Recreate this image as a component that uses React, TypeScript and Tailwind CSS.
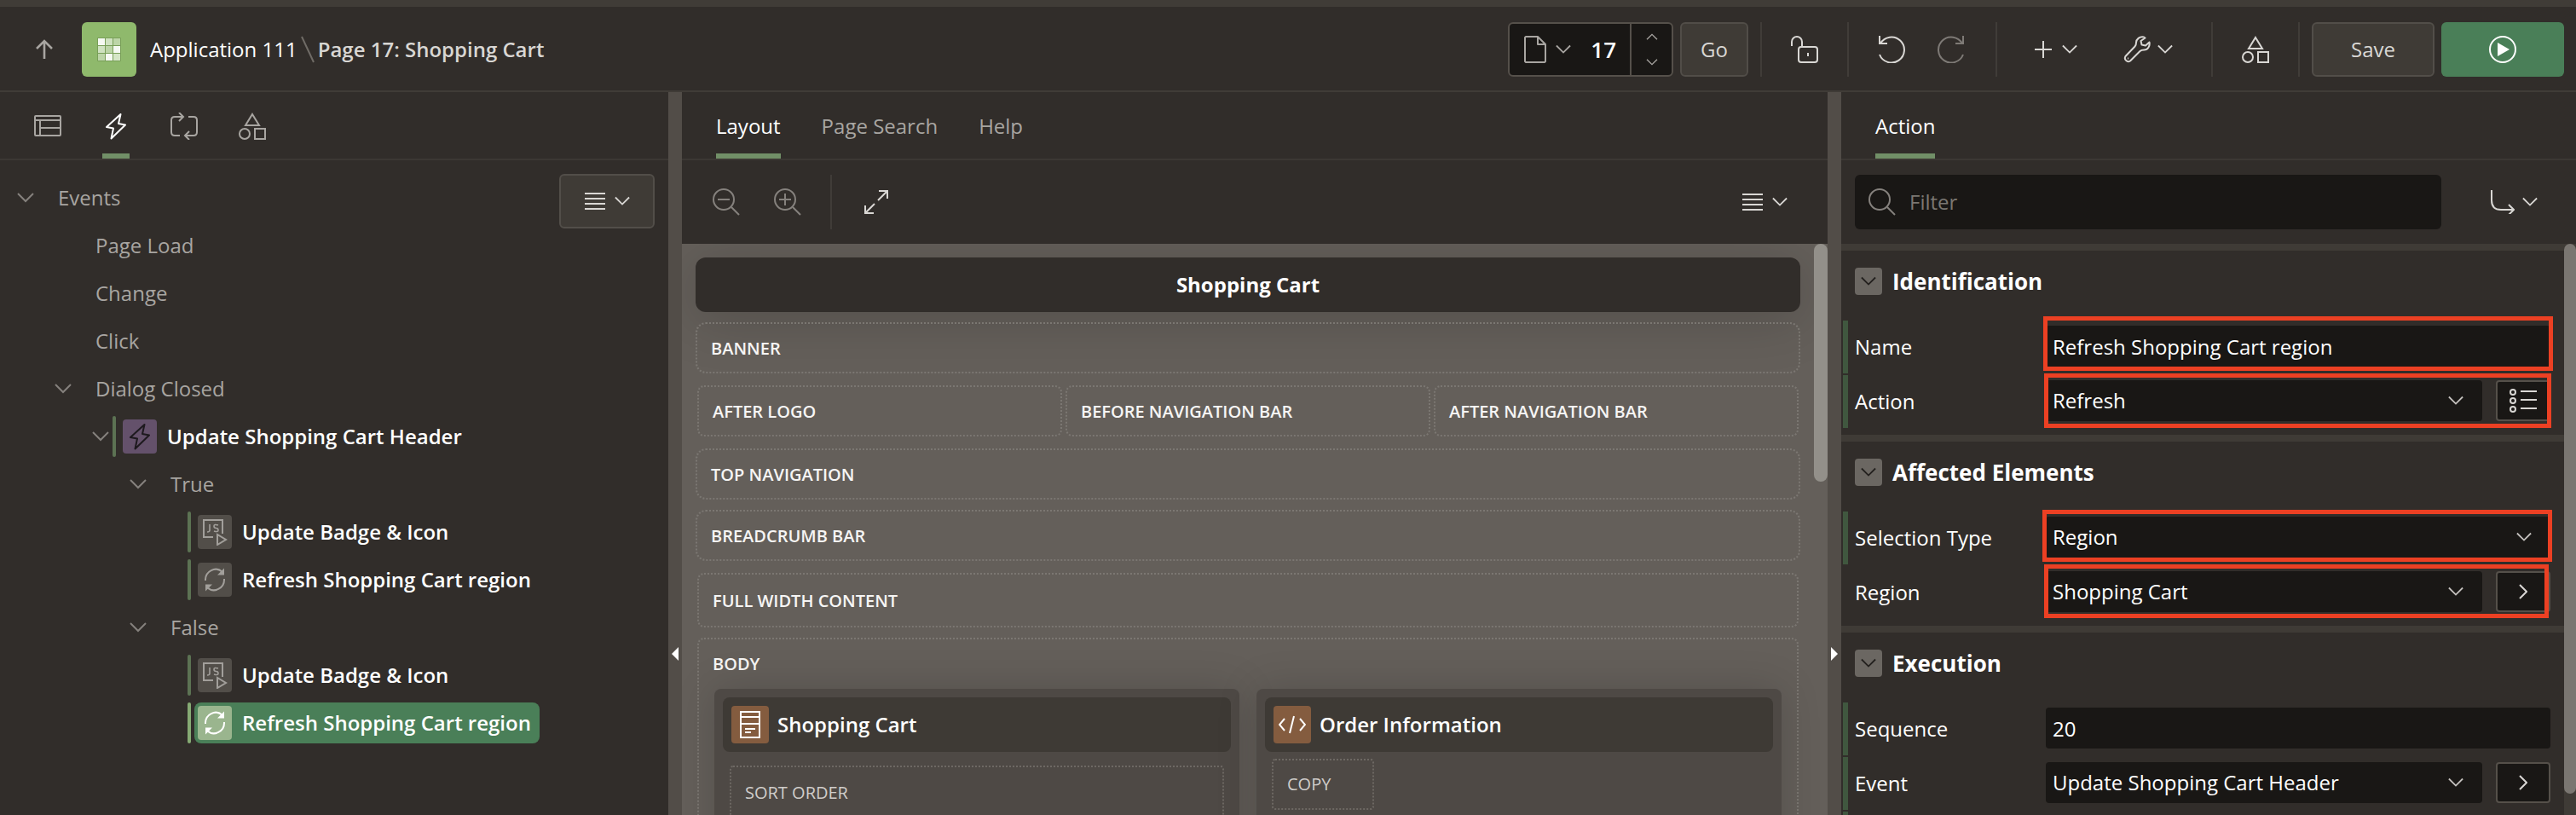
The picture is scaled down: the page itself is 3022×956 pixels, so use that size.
import React from "react";

type IconProps = { className?: string };

function Stroke({ className = "", box = "0 0 32 32", children }: { className?: string; box?: string; children: React.ReactNode }) {
  return (
    <svg aria-hidden="true" viewBox={box} fill="none" stroke="currentColor" strokeWidth={2} className={"shrink-0 " + className}>
      {children}
    </svg>
  );
}

const Chevron = ({ className = "w-5 h-3" }: IconProps) => (
  <Stroke box="0 0 20 12" className={className}>
    <path d="M1 1l9 9 9-9" />
  </Stroke>
);

const Shapes = ({ className = "size-8" }: IconProps) => (
  <Stroke className={className}>
    <path d="M16 2l8 13H8z" />
    <circle cx="7" cy="25" r="6" />
    <rect x="19" y="19" width="12" height="12" />
  </Stroke>
);

const Bolt = ({ className = "size-8" }: IconProps) => (
  <Stroke className={className}>
    <path d="M21.5 2L5 17l8 1.500L10.500 30.500 27 14.500l-8-1.500z" strokeLinejoin="round" />
  </Stroke>
);

const Refresh = ({ className = "size-8" }: IconProps) => (
  <Stroke className={className}>
    <path d="M5 17A12 12.500 0 0 1 25 7M27 15A12 12.500 0 0 1 7 25" />
    <path d="M27 2.500v8h-8zM5 29.500v-8h8z" fill="currentColor" stroke="none" />
  </Stroke>
);

const Script = ({ className = "size-8" }: IconProps) => (
  <Stroke className={className}>
    <path d="M14 22H3V2h22v16" />
    <path d="M10 7v7q0 2-3 2M20 8q-5-1.500-5 1t2.500 2.500 2.500 2.500-5 1" strokeWidth={1.6} />
    <path d="M19 19v12l10-6z" />
  </Stroke>
);

const Menu = ({ className = "w-6 h-5" }: IconProps) => (
  <Stroke box="0 0 24 20" className={className}>
    <path d="M0 1h24M0 7h24M0 13h24M0 19h24" />
  </Stroke>
);

const Divider = () => <span className="h-16 w-0.5 shrink-0 bg-[#403c38]" />;

function Header() {
  return (
    <header className="flex h-[108px] shrink-0 items-center justify-between border-t-8 border-b-2 border-[#403c37] pt-0.5 pr-[14px] pl-9">
      <nav aria-label="Breadcrumb" className="flex items-center">
        <button aria-label="Up" className="flex size-8 items-center justify-center text-[#a8a5a1]">
          <Stroke box="0 0 20 24" className="h-6 w-5">
            <path d="M10 23V3M1 11l9-9 9 9" strokeWidth={2.6} />
          </Stroke>
        </button>
        <span className="ml-7 flex size-16 items-center justify-center rounded-md bg-[#8fb96c]">
          <svg aria-hidden="true" viewBox="0 0 28 28" className="size-7">
            <rect width="28" height="28" rx="1" fill="#789f58" />
            <g fill="#bcd5a7">
              <rect x="10" y="1" width="8" height="8" fill="#cfe2c0" />
              <rect x="19" y="1" width="8" height="8" />
              <rect x="1" y="10" width="8" height="8" fill="#cfe2c0" />
              <rect x="10" y="10" width="8" height="8" />
              <rect x="1" y="19" width="8" height="8" />
              <rect x="19" y="19" width="8" height="8" fill="#d5e6c7" />
            </g>
            <g fill="#f5f9f2">
              <rect x="1" y="1" width="8" height="8" />
              <rect x="19" y="10" width="8" height="8" />
              <rect x="10" y="19" width="8" height="8" />
            </g>
          </svg>
        </span>
        <a href="#application" className="ml-4 text-white">Application 111</a>
        <Stroke box="0 0 16 32" className="mx-1 h-8 w-4 text-[#6f6b66]">
          <path d="M1 1l14 30" />
        </Stroke>
        <h1 className="font-semibold text-[#d8d6d3]">Page 17: Shopping Cart</h1>
      </nav>
      <div className="flex items-center text-[#d9d7d4]">
        <div className="flex h-16 w-[194px] rounded-md border-2 border-[#55504a] bg-[#191715]">
          <button aria-label="Choose page" className="flex items-center gap-[11px] pl-[17px] text-[#a8a5a1]">
            <Stroke box="0 0 26 32" className="h-8 w-[26px]">
              <path d="M3 1h13l9 9v20l-1 1H2l-1-1V2l1-1zM16 1v9h9" strokeLinejoin="round" />
            </Stroke>
            <Chevron className="h-3 w-[18px]" />
          </button>
          <input aria-label="Page number" defaultValue="17" className="w-full min-w-0 bg-transparent pr-4 text-right text-[26px] font-semibold text-white outline-none" />
          <div className="flex w-[49px] shrink-0 flex-col items-center justify-between border-l-2 border-[#55504a] py-[11px] text-[#a8a5a1]">
            <button aria-label="Next page"><Chevron className="h-2 w-[14px] rotate-180" /></button>
            <button aria-label="Previous page"><Chevron className="h-2 w-[14px]" /></button>
          </div>
        </div>
        <button className="ml-2 h-16 w-20 rounded-md border-2 border-[#514d48] bg-[#3f3b36] font-medium">Go</button>
        <div className="ml-[14px] flex items-center">
          <Divider />
          <button aria-label="Unlocked" className="mx-[34px]">
            <Stroke className="size-8">
              <path d="M1 12V7a6 6 0 0 1 12 0v6" />
              <rect x="9" y="13" width="22" height="18" rx="3" />
              <path d="M20 20v4" />
            </Stroke>
          </button>
          <Divider />
          <button aria-label="Undo" className="ml-[34px]">
            <Stroke className="size-8"><path d="M2 0v9h9M3 9A15 15 0 1 1 2 22" /></Stroke>
          </button>
          <button aria-label="Redo" className="mr-9 ml-[38px] text-[#7e7a76]">
            <Stroke className="size-8"><path d="M30 0v9h-9M29 9A15 15 0 1 0 30 22" /></Stroke>
          </button>
          <Divider />
          <button aria-label="Create" className="ml-11 flex items-center gap-3">
            <Stroke box="0 0 20 20" className="size-5"><path d="M10 0v20M0 10h20" /></Stroke>
            <Chevron className="h-3 w-[18px]" />
          </button>
          <button aria-label="Utilities" className="mr-[45px] ml-[54px] flex items-center gap-2">
            <Stroke className="size-8">
              <path d="M24 1.500C19 .5 15 4 15 8q0 3-1.500 4.500L2.500 24a4 4 0 0 0 5.500 5.500L19.500 18q1.500-1.500 5-1.500c4 0 7-4.500 6-9l-4.500 4-4.500-1-1-4.500 5-3.500z" strokeLinejoin="round" />
              <path d="M5 26.500h1" />
            </Stroke>
            <Chevron className="h-3 w-[18px]" />
          </button>
          <Divider />
          <button aria-label="Shared components" className="mx-[34px]"><Shapes /></button>
          <Divider />
        </div>
        <button className="ml-[14px] h-16 w-36 rounded-md border-2 border-[#524e49] bg-[#3f3b36] font-medium">Save</button>
        <button aria-label="Save and run page" className="ml-2 flex h-16 w-36 items-center justify-center rounded-md bg-[#4a7f58] text-white">
          <Stroke className="size-8">
            <circle cx="16" cy="16" r="15" />
            <path d="M10 8v16l14-8z" fill="currentColor" stroke="none" />
          </Stroke>
        </button>
      </div>
    </header>
  );
}

type Node = { level: number; label: string; open?: boolean; icon?: "event" | "script" | "refresh"; selected?: boolean };

const nodes: Node[] = [
  { level: 0, label: "Events", open: true },
  { level: 1, label: "Page Load" },
  { level: 1, label: "Change" },
  { level: 1, label: "Click" },
  { level: 1, label: "Dialog Closed", open: true },
  { level: 2, label: "Update Shopping Cart Header", open: true, icon: "event" },
  { level: 3, label: "True", open: true },
  { level: 4, label: "Update Badge & Icon", icon: "script" },
  { level: 4, label: "Refresh Shopping Cart region", icon: "refresh" },
  { level: 3, label: "False", open: true },
  { level: 4, label: "Update Badge & Icon", icon: "script" },
  { level: 4, label: "Refresh Shopping Cart region", icon: "refresh", selected: true },
];

const indents = ["pl-5", "pl-16", "pl-[108px]", "pl-[152px]", "pl-[196px]"];

function TreeRow({ node }: { node: Node }) {
  const tile =
    node.icon === "event" ? "bg-[#64516b] text-[#1d191e]" : node.selected ? "bg-[#9ab58e] text-white" : "bg-[#524e49] text-[#a29f9b]";
  return (
    <li role="treeitem" aria-selected={!!node.selected} className={"flex h-14 items-center " + indents[node.level]}>
      <span className="w-5 shrink-0 text-[#85817d]">{node.open && <Chevron />}</span>
      {node.icon ? (
        <>
          <span className={"ml-1 h-12 w-1 rounded-full " + (node.selected ? "bg-[#86ab74]" : "bg-[#5c7253]")} />
          <span className={"ml-1 flex h-12 items-center rounded-lg pr-2.5 pl-1 font-semibold text-white " + (node.selected ? "bg-[#4a7f58]" : "")}>
            <span className={"mr-3 flex size-10 items-center justify-center rounded " + tile}>
              {node.icon === "event" && <Bolt />}
              {node.icon === "script" && <Script />}
              {node.icon === "refresh" && <Refresh />}
            </span>
            {node.label}
          </span>
        </>
      ) : (
        <span className="pl-7 text-[#a8a5a1]">{node.label}</span>
      )}
    </li>
  );
}

function TreePanel() {
  return (
    <aside className="flex w-[784px] shrink-0 flex-col">
      <div role="tablist" className="flex h-20 shrink-0 border-b-2 border-[#3c3834] pl-4 text-[#a8a5a1]">
        <button role="tab" aria-label="Rendering" className="flex w-20 items-center justify-center pt-0.5">
          <Stroke className="size-8">
            <rect x="1" y="4" width="30" height="23" rx="1" />
            <path d="M1 9h30M7 9v18M7 18h24" />
          </Stroke>
        </button>
        <button role="tab" aria-label="Dynamic Actions" aria-selected="true" className="mx-6 flex w-8 items-center justify-center border-b-6 border-[#718f67] pt-2 text-white">
          <Bolt />
        </button>
        <button role="tab" aria-label="Processing" className="flex w-20 items-center justify-center pt-0.5">
          <Stroke className="size-8">
            <path d="M15 5H5Q1 5 1 9v14q0 4 4 4h6M17 27h10q4 0 4-4V9q0-4-4-4h-6M10 0l5 5-5 5M22 22l-5 5 5 5" />
          </Stroke>
        </button>
        <button role="tab" aria-label="Page Shared Components" className="flex w-20 items-center justify-center pt-0.5"><Shapes /></button>
      </div>
      <div className="relative pt-4">
        <ul role="tree">
          {nodes.map((n, i) => <TreeRow key={i} node={n} />)}
        </ul>
        <button aria-label="Tree menu" className="absolute top-4 right-4 flex h-16 w-28 items-center justify-center gap-[11px] rounded-md border-2 border-[#524e49] bg-[#3f3b36] text-[#d9d7d4]">
          <Menu />
          <Chevron className="h-3 w-[18px]" />
        </button>
      </div>
    </aside>
  );
}

function Splitter({ side }: { side: "left" | "right" }) {
  return (
    <div className="flex w-4 shrink-0 items-center justify-center bg-[#524d48] pt-[474px] pb-[5px]">
      <button aria-label={side === "left" ? "Collapse tree" : "Collapse properties"} className="text-white">
        <svg aria-hidden="true" viewBox="0 0 8 16" className={side === "left" ? "h-4 w-2" : "h-4 w-2 rotate-180"}>
          <path d="M8 0L0 8l8 8z" fill="currentColor" />
        </svg>
      </button>
    </div>
  );
}

const dotted = "border-2 border-dotted";

function Slot({ label, className }: { label: string; className: string }) {
  return <div className={dotted + " flex items-center border-[#7b7772] px-4 pt-0.5 text-xl font-semibold text-[#f6f5f4] " + className}>{label}</div>;
}

function Card({ title, icon, children }: { title: string; icon: React.ReactNode; children: React.ReactNode }) {
  return (
    <section className="h-60 flex-1 rounded-lg bg-[#4e4945] p-[10px] shadow-[0_0_48px_rgba(0,0,0,0.16)]">
      <h3 className="flex h-16 items-center gap-[10px] rounded-lg bg-[#3e3a35] pl-[10px] font-semibold text-white">
        <span className="flex size-11 items-center justify-center rounded bg-[#845c3f]">{icon}</span>
        {title}
      </h3>
      {children}
    </section>
  );
}

function LayoutPanel() {
  return (
    <main className="flex min-w-0 flex-1 flex-col">
      <div role="tablist" className="flex h-20 shrink-0 gap-12 border-b-2 border-[#3c3834] pl-10 text-[#a8a5a1]">
        <button role="tab" aria-selected="true" className="border-b-6 border-[#718f67] pt-2 text-white">Layout</button>
        <button role="tab" className="pt-0.5">Page Search</button>
        <button role="tab" className="pt-0.5">Help</button>
      </div>
      <div className="flex h-[98px] shrink-0 items-center justify-between pr-[47px] pl-9">
        <div className="flex items-center text-[#85817d]">
          <button aria-label="Zoom out">
            <Stroke className="size-8"><circle cx="13" cy="13" r="12" /><path d="M22 22l9 9M6 13h14" /></Stroke>
          </button>
          <button aria-label="Zoom in" className="mr-[34px] ml-10">
            <Stroke className="size-8"><circle cx="13" cy="13" r="12" /><path d="M22 22l9 9M6 13h14M13 6v14" /></Stroke>
          </button>
          <Divider />
          <button aria-label="Expand" className="ml-[38px] text-[#d9d7d4]">
            <Stroke box="0 0 28 28" className="size-7">
              <path d="M16 12L27 1M17 1h10v9M12 16L1 27M1 18v9h10" />
            </Stroke>
          </button>
        </div>
        <button aria-label="Layout menu" className="flex items-center gap-[11px] text-[#d9d7d4]">
          <Menu />
          <Chevron className="h-3 w-[18px]" />
        </button>
      </div>
      <div className="relative min-h-0 flex-1 overflow-hidden bg-[#645f5a] px-4 pt-4 pr-8">
        <span className="absolute top-0 right-0 h-[279px] w-4 rounded-full bg-[#93908a]" />
        <h2 className="flex h-16 items-center justify-center rounded-xl bg-[#312d2a] font-bold text-white shadow-[0_8px_64px_rgba(0,0,0,0.18)]">Shopping Cart</h2>
        <Slot label="BANNER" className="mt-3 h-[60px] rounded-xl" />
        <div className="mt-3.5 grid grid-cols-3 gap-1 px-0.5">
          <Slot label="AFTER LOGO" className="h-[60px] rounded-lg" />
          <Slot label="BEFORE NAVIGATION BAR" className="h-[60px] rounded-lg" />
          <Slot label="AFTER NAVIGATION BAR" className="h-[60px] rounded-lg" />
        </div>
        <Slot label="TOP NAVIGATION" className="mt-3.5 h-[60px] rounded-xl" />
        <Slot label="BREADCRUMB BAR" className="mt-3 h-[60px] rounded-xl" />
        <Slot label="FULL WIDTH CONTENT" className="mx-0.5 mt-3.5 h-16 rounded-lg" />
        <div className={dotted + " mx-0.5 mt-3 h-80 rounded-lg border-[#7b7772]"}>
          <h3 className="flex h-[58px] items-center pl-4 text-xl font-semibold text-[#f6f5f4]">BODY</h3>
          <div className="flex gap-5 px-[18px]">
            <Card
              title="Shopping Cart"
              icon={
                <Stroke box="0 0 24 32" className="h-8 w-6">
                  <rect x="1" y="1" width="22" height="30" />
                  <path d="M1 7h22M1 15h22M6 21h12M6 25h7" />
                </Stroke>
              }
            >
              <div className={dotted + " mx-2 mt-4 h-32 rounded border-[#6d6863] pt-4 pl-4 text-xl text-[#d0cdca]"}>SORT ORDER</div>
            </Card>
            <Card
              title="Order Information"
              icon={
                <Stroke className="size-8">
                  <path d="M7 9l-6 7 6 7M25 9l6 7-6 7M18 6l-5 20" />
                </Stroke>
              }
            >
              <div className={dotted + " mx-2 mt-2 flex h-[60px] w-[120px] items-center rounded border-[#6d6863] pl-4 text-xl text-[#d0cdca]"}>COPY</div>
            </Card>
          </div>
        </div>
      </div>
    </main>
  );
}

type Field = { label: string; value: string; kind: "text" | "select"; action?: "list" | "go"; marked: boolean; highlight?: string };

const groups: { title: string; fields: Field[]; more?: boolean }[] = [
  {
    title: "Identification",
    fields: [
      { label: "Name", value: "Refresh Shopping Cart region", kind: "text", marked: true, highlight: "-top-[3px] h-16 -left-[3px] -right-[3px]" },
      { label: "Action", value: "Refresh", kind: "select", action: "list", marked: true, highlight: "top-0 h-16 -left-0.5 -right-px" },
    ],
  },
  {
    title: "Affected Elements",
    fields: [
      { label: "Selection Type", value: "Region", kind: "select", marked: true, highlight: "top-0 h-[61px] -left-1 -right-0.5" },
      { label: "Region", value: "Shopping Cart", kind: "select", action: "go", marked: false, highlight: "top-0 h-[63px] -left-0.5 right-0.5" },
    ],
  },
  {
    title: "Execution",
    more: true,
    fields: [
      { label: "Sequence", value: "20", kind: "text", marked: true },
      { label: "Event", value: "Update Shopping Cart Header", kind: "select", action: "go", marked: true },
    ],
  },
];

function FieldRow({ field }: { field: Field }) {
  const id = field.label.toLowerCase().replace(/ /g, "-");
  const box = "h-12 w-full min-w-0 appearance-none rounded bg-[#191715] px-2 text-white outline-none";
  return (
    <div className="flex h-16 pr-4 pl-0.5">
      <span className={"mt-0.5 w-1.5 shrink-0 " + (field.marked ? "bg-[#40573f]" : "")} />
      <label htmlFor={id} className="flex w-[232px] shrink-0 items-center pt-0.5 pl-2 text-white">{field.label}</label>
      <div className="relative flex min-w-0 flex-1 gap-4 pt-2">
        {field.kind === "text" ? (
          <input id={id} defaultValue={field.value} className={box} />
        ) : (
          <div className="relative min-w-0 flex-1">
            <select id={id} className={box}>
              <option>{field.value}</option>
            </select>
            <Chevron className="pointer-events-none absolute top-[18px] right-[22px] h-3 w-[18px] text-[#c4c1be]" />
          </div>
        )}
        {field.action && (
          <button
            aria-label={field.action === "list" ? "Quick pick" : "Go to component"}
            className="flex h-12 w-16 shrink-0 items-center justify-center rounded border-2 border-[#55504a] bg-[#191715] text-[#d9d7d4]"
          >
            {field.action === "list" ? (
              <Stroke className="size-8">
                <circle cx="4" cy="6" r="3" />
                <circle cx="4" cy="16" r="3" />
                <circle cx="4" cy="26" r="3" />
                <path d="M13 5h19M13 15h19M13 25h19" />
              </Stroke>
            ) : (
              <Stroke box="0 0 10 18" className="h-[18px] w-2.5"><path d="M1 1l8 8-8 8" /></Stroke>
            )}
          </button>
        )}
        {field.highlight && <span className={"pointer-events-none absolute border-5 border-[#ec4023] " + field.highlight} />}
      </div>
    </div>
  );
}

function PropertyPanel() {
  return (
    <aside className="flex w-[862px] shrink-0 flex-col">
      <div role="tablist" className="flex h-20 shrink-0 border-b-2 border-[#3c3834] pl-10">
        <button role="tab" aria-selected="true" className="border-b-6 border-[#718f67] pt-2 text-white">Action</button>
      </div>
      <div className="flex h-[98px] shrink-0 items-center justify-between pr-[45px] pl-4">
        <label className="flex h-16 w-[688px] items-center gap-4 rounded-md bg-[#191715] px-4 text-[#85817d]">
          <Stroke className="size-8"><circle cx="13" cy="13" r="12" /><path d="M22 22l9 9" /></Stroke>
          <input type="search" aria-label="Filter" placeholder="Filter" className="min-w-0 flex-1 bg-transparent outline-none placeholder:text-[#7b7772]" />
        </label>
        <button aria-label="Go to group" className="flex items-center gap-[9px] text-[#d9d7d4]">
          <Stroke box="0 0 28 28" className="size-7"><path d="M1 0v12q0 11 11 11h15M21 17l6 6-6 6" /></Stroke>
          <Chevron className="h-3 w-[18px]" />
        </button>
      </div>
      <div className="flex min-h-0 flex-1">
        <div className="min-w-0 flex-1 overflow-hidden">
          {groups.map((g) => (
            <section key={g.title} className="border-t-8 border-[#3f3b36] pb-2">
              <h2 className="flex h-20 items-start gap-3 pt-5 text-[26px] leading-8 font-bold text-white">
                <button aria-label={"Collapse " + g.title} className="ml-4 flex size-8 items-center justify-center rounded bg-[#6b6762] text-[#23201e]">
                  <Chevron className="h-3 w-[18px]" />
                </button>
                {g.title}
              </h2>
              {g.fields.map((f) => <FieldRow key={f.label} field={f} />)}
              {g.more && <div className="mt-0.5 ml-0.5 h-16 w-1.5 bg-[#40573f]" />}
            </section>
          ))}
        </div>
        <div className="w-3.5 shrink-0 bg-[#3f3b36]">
          <div className="h-[645px] rounded-full bg-[#7a7671]" />
        </div>
      </div>
    </aside>
  );
}

export default function App() {
  return (
    <div className="flex h-screen flex-col overflow-hidden bg-[#312d2a] font-['Open_Sans','Noto_Sans',sans-serif] text-2xl">
      <Header />
      <div className="flex min-h-0 flex-1">
        <TreePanel />
        <Splitter side="left" />
        <LayoutPanel />
        <Splitter side="right" />
        <PropertyPanel />
      </div>
    </div>
  );
}
